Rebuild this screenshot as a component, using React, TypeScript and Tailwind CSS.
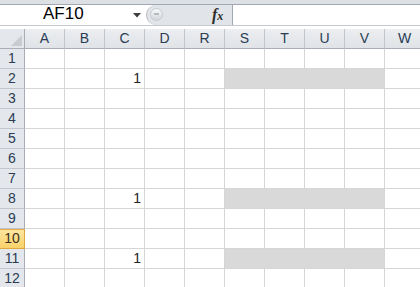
import React from 'react';

const cols = ['A', 'B', 'C', 'D', 'R', 'S', 'T', 'U', 'V', 'W'];
const rows = [1, 2, 3, 4, 5, 6, 7, 8, 9, 10, 11, 12];
const marked = [2, 8, 11];
const shaded = ['S', 'T', 'U', 'V'];

function FormulaBar() {
  return (
    <div className="h-[29px] flex flex-col bg-white">
      <div className="h-[4px] bg-[#dde0e4]" />
      <div className="h-[22px] flex border-t border-b border-t-[#a3a9b0] border-b-[#c6cad0]">
        {/* name box */}
        <div className="w-[146px] relative bg-white">
          <span className="absolute left-[43px] top-[-1px] text-[17px] leading-[20px] text-black">AF10</span>
          <svg className="absolute left-[133px] top-[8px]" width="8" height="5" viewBox="0 0 8 5">
            <polygon points="0,0 8,0 4,4.5" fill="#3c3c3c" />
          </svg>
        </div>
        {/* grip + fx */}
        <div className="w-[86px] relative bg-[#e1e4e8] rounded-l-[10px] border-l border-[#b3b8be]">
          <div className="absolute left-[3px] top-[3px] w-[13px] h-[13px] rounded-full bg-gradient-to-b from-[#f7f8f9] to-[#d3d6da] border border-[#c6cace]" />
          <div className="absolute left-[7px] top-[8px] w-[5px] h-[2px] bg-[#b8bcc1]" />
          <span className="absolute left-[65px] top-[0px] text-[16px] leading-[20px] italic font-bold text-[#2e2e2e] font-['Liberation_Serif',serif]">
            f<span className="text-[12px]">x</span>
          </span>
        </div>
        <div className="flex-1 bg-white border-l border-[#a3a9b0]" />
      </div>
      <div className="h-[3px] bg-white" />
    </div>
  );
}

export default function App() {
  return (
    <div className="w-[420px] h-[287px] overflow-hidden bg-white font-['Liberation_Sans',Arial,sans-serif]">
      <FormulaBar />
      {/* column headers */}
      <div className="flex h-[20px]">
        <div className="w-[25px] shrink-0 relative bg-[#e4e7eb] border-r border-b border-[#a9aeb5]">
          <svg className="absolute right-[2px] bottom-[2px]" width="11" height="11" viewBox="0 0 11 11">
            <polygon points="11,0 11,11 0,11" fill="#c8cbd0" />
          </svg>
        </div>
        {cols.map((c) => (
          <div
            key={c}
            className="w-[40px] shrink-0 bg-gradient-to-b from-[#eceef1] to-[#e0e3e7] border-r border-b border-r-[#c2c6cc] border-b-[#a9aeb5] flex items-center justify-center text-[14px] text-[#2a3d55]"
          >
            {c}
          </div>
        ))}
      </div>
      {rows.map((r) => {
        const active = r === 10;
        const isMarked = marked.includes(r);
        return (
          <div key={r} className="flex h-[20px]">
            <div
              className={
                active
                  ? 'w-[25px] shrink-0 bg-gradient-to-b from-[#fde7a0] to-[#f9d26a] border-r border-b border-[#e0a73f] shadow-[inset_0_1px_0_#e6ae46] flex items-center justify-center text-[14px] text-[#3a3020]'
                  : 'w-[25px] shrink-0 bg-[#e4e7eb] border-r border-b border-r-[#a9aeb5] border-b-[#c2c6cc] flex items-center justify-center text-[14px] text-[#2a3d55]'
              }
            >
              {r}
            </div>
            {cols.map((c) => {
              const fill = isMarked && shaded.includes(c);
              return (
                <div
                  key={c}
                  className={
                    fill
                      ? c === 'V'
                        ? 'w-[40px] shrink-0 bg-[#d9d9d9] border-r border-b border-[#d6d6d6]'
                        : 'w-[40px] shrink-0 bg-[#d9d9d9] border-r border-b border-r-[#d9d9d9] border-b-[#d6d6d6]'
                      : 'w-[40px] shrink-0 border-r border-b border-[#d6d6d6] flex items-center justify-end pr-[3px] text-[14px] text-[#222]'
                  }
                >
                  {isMarked && c === 'C' ? '1' : null}
                </div>
              );
            })}
          </div>
        );
      })}
    </div>
  );
}
